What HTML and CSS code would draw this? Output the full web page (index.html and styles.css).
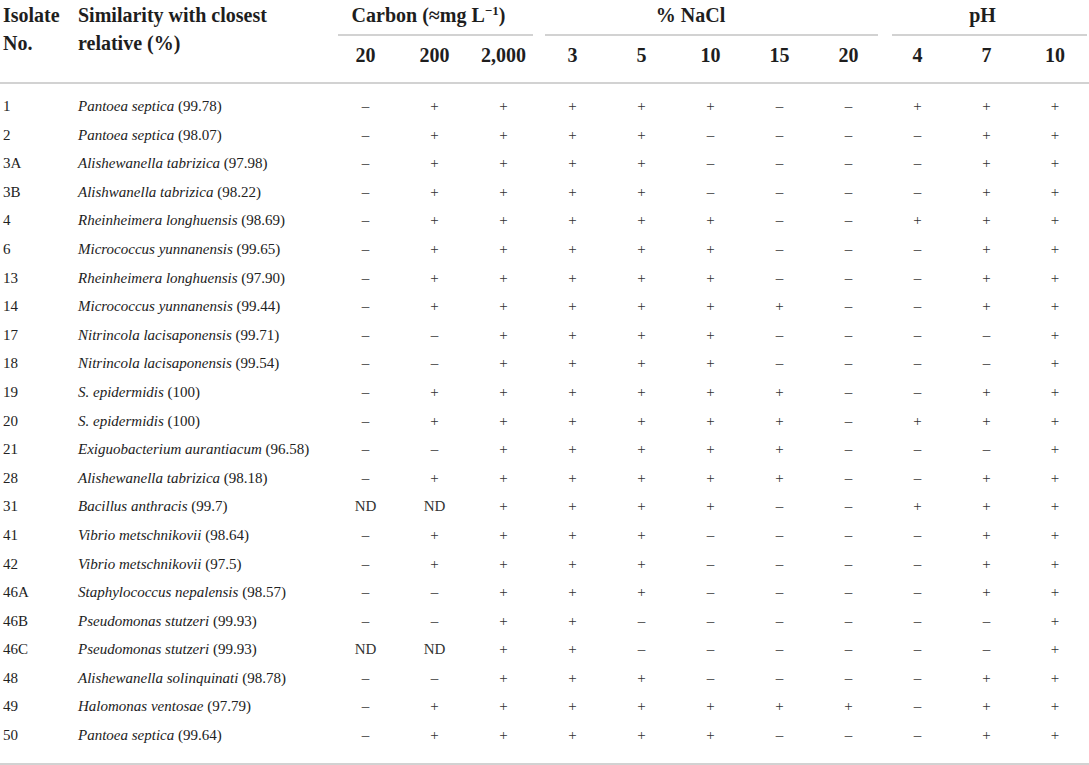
FILE: index.html
```html
<!DOCTYPE html>
<html>
<head>
  <title>Isolate growth table</title>
  <link rel="stylesheet" href="styles.css">
</head>
<body>
  <table class="growth-table">
    <colgroup>
      <col class="col-id">
      <col class="col-name">
      <col class="col-val"><col class="col-val"><col class="col-val">
      <col class="col-val"><col class="col-val"><col class="col-val"><col class="col-val"><col class="col-val">
      <col class="col-val"><col class="col-val"><col class="col-last">
    </colgroup>
    <thead>
      <tr class="group-row">
        <th rowspan="2" class="head-left">Isolate<br>No.</th>
        <th rowspan="2" class="head-left">Similarity with closest<br>relative (%)</th>
        <th colspan="3"><div class="group carbon"><span>Carbon (&asymp;mg L<sup>&minus;1</sup>)</span></div></th>
        <th colspan="5"><div class="group nacl"><span>% NaCl</span></div></th>
        <th colspan="3"><div class="group ph"><span>pH</span></div></th>
      </tr>
      <tr class="sub-row">
        <th>20</th><th>200</th><th>2,000</th>
        <th>3</th><th>5</th><th>10</th><th>15</th><th>20</th>
        <th>4</th><th>7</th><th>10</th>
      </tr>
    </thead>
    <tbody>
      <tr><td>1</td><td><i>Pantoea septica</i> (99.78)</td><td>–</td><td>+</td><td>+</td><td>+</td><td>+</td><td>+</td><td>–</td><td>–</td><td>+</td><td>+</td><td>+</td></tr>
      <tr><td>2</td><td><i>Pantoea septica</i> (98.07)</td><td>–</td><td>+</td><td>+</td><td>+</td><td>+</td><td>–</td><td>–</td><td>–</td><td>–</td><td>+</td><td>+</td></tr>
      <tr><td>3A</td><td><i>Alishewanella tabrizica</i> (97.98)</td><td>–</td><td>+</td><td>+</td><td>+</td><td>+</td><td>–</td><td>–</td><td>–</td><td>–</td><td>+</td><td>+</td></tr>
      <tr><td>3B</td><td><i>Alishwanella tabrizica</i> (98.22)</td><td>–</td><td>+</td><td>+</td><td>+</td><td>+</td><td>–</td><td>–</td><td>–</td><td>–</td><td>+</td><td>+</td></tr>
      <tr><td>4</td><td><i>Rheinheimera longhuensis</i> (98.69)</td><td>–</td><td>+</td><td>+</td><td>+</td><td>+</td><td>+</td><td>–</td><td>–</td><td>+</td><td>+</td><td>+</td></tr>
      <tr><td>6</td><td><i>Micrococcus yunnanensis</i> (99.65)</td><td>–</td><td>+</td><td>+</td><td>+</td><td>+</td><td>+</td><td>–</td><td>–</td><td>–</td><td>+</td><td>+</td></tr>
      <tr><td>13</td><td><i>Rheinheimera longhuensis</i> (97.90)</td><td>–</td><td>+</td><td>+</td><td>+</td><td>+</td><td>+</td><td>–</td><td>–</td><td>–</td><td>+</td><td>+</td></tr>
      <tr><td>14</td><td><i>Micrococcus yunnanensis</i> (99.44)</td><td>–</td><td>+</td><td>+</td><td>+</td><td>+</td><td>+</td><td>+</td><td>–</td><td>–</td><td>+</td><td>+</td></tr>
      <tr><td>17</td><td><i>Nitrincola lacisaponensis</i> (99.71)</td><td>–</td><td>–</td><td>+</td><td>+</td><td>+</td><td>+</td><td>–</td><td>–</td><td>–</td><td>–</td><td>+</td></tr>
      <tr><td>18</td><td><i>Nitrincola lacisaponensis</i> (99.54)</td><td>–</td><td>–</td><td>+</td><td>+</td><td>+</td><td>+</td><td>–</td><td>–</td><td>–</td><td>–</td><td>+</td></tr>
      <tr><td>19</td><td><i>S. epidermidis</i> (100)</td><td>–</td><td>+</td><td>+</td><td>+</td><td>+</td><td>+</td><td>+</td><td>–</td><td>–</td><td>+</td><td>+</td></tr>
      <tr><td>20</td><td><i>S. epidermidis</i> (100)</td><td>–</td><td>+</td><td>+</td><td>+</td><td>+</td><td>+</td><td>+</td><td>–</td><td>+</td><td>+</td><td>+</td></tr>
      <tr><td>21</td><td><i>Exiguobacterium aurantiacum</i> (96.58)</td><td>–</td><td>–</td><td>+</td><td>+</td><td>+</td><td>+</td><td>+</td><td>–</td><td>–</td><td>–</td><td>+</td></tr>
      <tr><td>28</td><td><i>Alishewanella tabrizica</i> (98.18)</td><td>–</td><td>+</td><td>+</td><td>+</td><td>+</td><td>+</td><td>+</td><td>–</td><td>–</td><td>+</td><td>+</td></tr>
      <tr><td>31</td><td><i>Bacillus anthracis</i> (99.7)</td><td>ND</td><td>ND</td><td>+</td><td>+</td><td>+</td><td>+</td><td>–</td><td>–</td><td>+</td><td>+</td><td>+</td></tr>
      <tr><td>41</td><td><i>Vibrio metschnikovii</i> (98.64)</td><td>–</td><td>+</td><td>+</td><td>+</td><td>+</td><td>–</td><td>–</td><td>–</td><td>–</td><td>+</td><td>+</td></tr>
      <tr><td>42</td><td><i>Vibrio metschnikovii</i> (97.5)</td><td>–</td><td>+</td><td>+</td><td>+</td><td>+</td><td>–</td><td>–</td><td>–</td><td>–</td><td>+</td><td>+</td></tr>
      <tr><td>46A</td><td><i>Staphylococcus nepalensis</i> (98.57)</td><td>–</td><td>–</td><td>+</td><td>+</td><td>+</td><td>–</td><td>–</td><td>–</td><td>–</td><td>+</td><td>+</td></tr>
      <tr><td>46B</td><td><i>Pseudomonas stutzeri</i> (99.93)</td><td>–</td><td>–</td><td>+</td><td>+</td><td>–</td><td>–</td><td>–</td><td>–</td><td>–</td><td>–</td><td>+</td></tr>
      <tr><td>46C</td><td><i>Pseudomonas stutzeri</i> (99.93)</td><td>ND</td><td>ND</td><td>+</td><td>+</td><td>–</td><td>–</td><td>–</td><td>–</td><td>–</td><td>–</td><td>+</td></tr>
      <tr><td>48</td><td><i>Alishewanella solinquinati</i> (98.78)</td><td>–</td><td>–</td><td>+</td><td>+</td><td>+</td><td>–</td><td>–</td><td>–</td><td>–</td><td>+</td><td>+</td></tr>
      <tr><td>49</td><td><i>Halomonas ventosae</i> (97.79)</td><td>–</td><td>+</td><td>+</td><td>+</td><td>+</td><td>+</td><td>+</td><td>+</td><td>–</td><td>+</td><td>+</td></tr>
      <tr><td>50</td><td><i>Pantoea septica</i> (99.64)</td><td>–</td><td>+</td><td>+</td><td>+</td><td>+</td><td>+</td><td>–</td><td>–</td><td>–</td><td>+</td><td>+</td></tr>
    </tbody>
  </table>
</body>
</html>
```

FILE: styles.css
```css
* {
  margin: 0;
  padding: 0;
  box-sizing: border-box;
}

html, body {
  background: white;
  overflow: hidden;
}

body {
  font-family: 'Liberation Serif', 'Times New Roman', serif;
  color: #222;
}

.growth-table {
  width: 1089px;
  table-layout: fixed;
  border-collapse: collapse;
  border-bottom: 2px solid #d2d2d2;
}

.col-id { width: 75px; }
.col-name { width: 256px; }
.col-val { width: 69px; }
.col-last { width: 68px; }

/* header */
th {
  font-size: 20px;
  font-weight: 700;
  color: #1e1e1e;
  text-align: center;
  line-height: 24px;
}

.group-row th {
  padding-top: 3px;
  vertical-align: top;
}

.group-row .head-left {
  text-align: left;
  line-height: 28px;
  padding: 1px 0 0 3px;
  border-bottom: 2px solid #d2d2d2;
}

.group {
  border-bottom: 2px solid #d2d2d2;
  padding-bottom: 7px;
}

.group.carbon { margin: 0 5px 0 7px; padding-right: 14px; }
.group.nacl { margin: 0 5px 0 7px; padding-right: 42px; }
.group.ph { margin: 0 2px 0 9px; padding-right: 14px; }

.group sup {
  font-size: 13px;
  line-height: 0;
  vertical-align: 7px;
}

.sub-row th {
  padding: 7px 0 15px;
  border-bottom: 2px solid #d2d2d2;
}

/* body rows */
td {
  font-size: 15px;
  line-height: 28.6px;
  text-align: center;
  color: #333;
  white-space: nowrap;
}

td:nth-child(1) {
  text-align: left;
  padding-left: 3px;
  color: #222;
}

td:nth-child(2) {
  text-align: left;
  padding-left: 3px;
  color: #222;
}

tbody tr:first-child td {
  padding-top: 8px;
}

tbody tr:last-child td {
  padding-bottom: 13px;
}
```
